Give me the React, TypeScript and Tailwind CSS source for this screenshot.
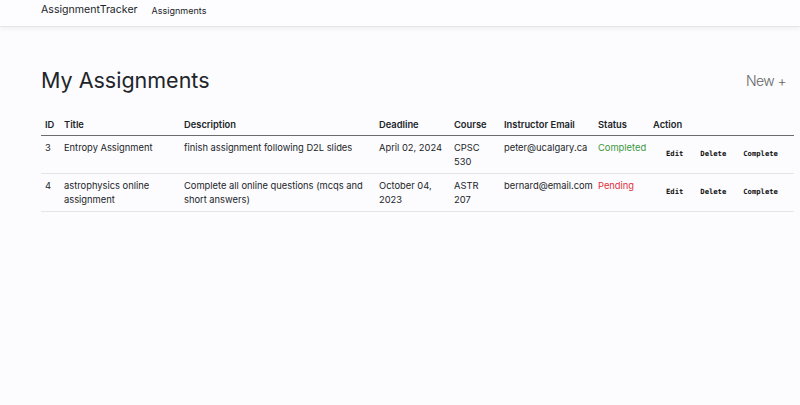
import React from "react";

const rows = [
  {
    id: 3,
    title: "Entropy Assignment",
    desc: "finish assignment following D2L slides",
    deadline: "April 02, 2024",
    course: "CPSC 530",
    email: "peter@ucalgary.ca",
    status: "Completed",
  },
  {
    id: 4,
    title: "astrophysics online assignment",
    desc: "Complete all online questions (mcqs and short answers)",
    deadline: "October 04, 2023",
    course: "ASTR 207",
    email: "bernard@email.com",
    status: "Pending",
  },
];

export default function App() {
  return (
    <div
      className="min-h-[405px] bg-[#fcfbfd] text-[#212529]"
      style={{ fontFamily: "Inter, 'Helvetica Neue', Arial, sans-serif" }}
    >
      <nav className="h-[27px] bg-[#fdfcfe] border-b border-[#e4e3e6] shadow-[0_2px_4px_rgba(0,0,0,0.05)] flex items-center pl-[41px] pb-[6px]">
        <span className="text-[10.6px] mr-[14px] leading-none">AssignmentTracker</span>
        <span className="text-[9px] leading-none">Assignments</span>
      </nav>
      <main className="pl-[41px] pr-[6px]">
        <div className="flex items-center justify-between pt-[43px] pr-[8px]">
          <h1 className="text-[21.5px] leading-none">My Assignments</h1>
          <span className="text-[14px] font-light tracking-[-0.6px] text-[#666] leading-none">New +</span>
        </div>
        <table className="mt-[23px] w-full table-fixed border-collapse text-[9.33px] leading-[14px]">
          <colgroup>
            <col className="w-[19px]" />
            <col className="w-[120px]" />
            <col className="w-[195px]" />
            <col className="w-[75px]" />
            <col className="w-[50px]" />
            <col className="w-[94px]" />
            <col className="w-[55px]" />
            <col />
          </colgroup>
          <thead>
            <tr className="border-b border-[#6c6c6c] text-left">
              {["ID", "Title", "Description", "Deadline", "Course", "Instructor Email", "Status", "Action"].map((h) => (
                <th key={h} className="px-[4px] py-[3px] font-semibold">{h}</th>
              ))}
            </tr>
          </thead>
          <tbody>
            {rows.map((r) => (
              <tr key={r.id} className="border-b border-[#e5e4e7] align-top">
                <td className="px-[4px] pt-[5px] pb-[4px]">{r.id}</td>
                <td className="px-[4px] pt-[5px] pb-[4px]">{r.title}</td>
                <td className="px-[4px] pt-[5px] pb-[4px]">{r.desc}</td>
                <td className="px-[4px] pt-[5px] pb-[4px]">{r.deadline}</td>
                <td className="px-[4px] pt-[5px] pb-[4px]">{r.course}</td>
                <td className="px-[4px] pt-[5px] pb-[4px]">{r.email}</td>
                <td className={"px-[4px] pt-[5px] pb-[4px] " + (r.status === "Completed" ? "text-[#3a983c]" : "text-[#e0303c]")}>
                  {r.status}
                </td>
                <td className="px-[4px] pt-[5px] pb-[4px]">
                  <div
                    className="flex items-center gap-[17px] pl-[13px] pt-[9px] text-[7.2px] font-bold leading-none text-[#111]"
                    style={{ fontFamily: "'DejaVu Sans Mono', monospace" }}
                  >
                    <span>Edit</span>
                    <span>Delete</span>
                    <span>Complete</span>
                  </div>
                </td>
              </tr>
            ))}
          </tbody>
        </table>
      </main>
    </div>
  );
}
